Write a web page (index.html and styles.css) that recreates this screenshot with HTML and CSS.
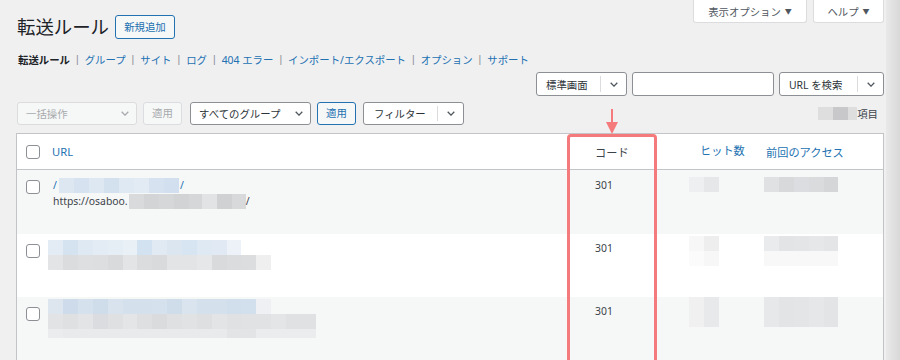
FILE: index.html
```html
<!DOCTYPE html>
<html lang="ja">
<head>
<meta charset="utf-8">
<title>転送ルール</title>
<link rel="stylesheet" href="styles.css">
</head>
<body>
<div class="page">
  <main class="main">
    <div class="header">
      <div class="title-row">
        <h1 class="title">転送ルール</h1>
        <a class="btn btn-primary-outline btn-add">新規追加</a>
      </div>
      <div class="screen-meta">
        <button class="meta-tab tab-options">表示オプション <span class="tri">▼</span></button>
        <button class="meta-tab tab-help">ヘルプ <span class="tri">▼</span></button>
      </div>
    </div>

    <ul class="subsub">
      <li class="current">転送ルール</li>
      <li class="sep">|</li>
      <li><a>グループ</a></li>
      <li class="sep">|</li>
      <li><a>サイト</a></li>
      <li class="sep">|</li>
      <li><a>ログ</a></li>
      <li class="sep">|</li>
      <li><a>404 エラー</a></li>
      <li class="sep">|</li>
      <li><a>インポート/エクスポート</a></li>
      <li class="sep">|</li>
      <li><a>オプション</a></li>
      <li class="sep">|</li>
      <li><a>サポート</a></li>
    </ul>

    <div class="search-row">
      <div class="select split sel-view">
        <span class="sel-label">標準画面</span>
        <span class="chev"><svg class="chev-ic" viewBox="0 0 8 5"><path d="M0.7 0.7 L4 4.1 L7.3 0.7" fill="none" stroke="currentColor" stroke-width="1.3"/></svg></span>
      </div>
      <div class="text-input"></div>
      <div class="select split sel-search">
        <span class="sel-label">URL を検索</span>
        <span class="chev"><svg class="chev-ic" viewBox="0 0 8 5"><path d="M0.7 0.7 L4 4.1 L7.3 0.7" fill="none" stroke="currentColor" stroke-width="1.3"/></svg></span>
      </div>
    </div>

    <div class="filter-row">
      <div class="select disabled sel-bulk">
        <span class="sel-label">一括操作</span>
        <span class="chev"><svg class="chev-ic" viewBox="0 0 8 5"><path d="M0.7 0.7 L4 4.1 L7.3 0.7" fill="none" stroke="currentColor" stroke-width="1.3"/></svg></span>
      </div>
      <span class="btn btn-disabled btn-apply">適用</span>
      <div class="select sel-group">
        <span class="sel-label">すべてのグループ</span>
        <span class="chev"><svg class="chev-ic" viewBox="0 0 8 5"><path d="M0.7 0.7 L4 4.1 L7.3 0.7" fill="none" stroke="currentColor" stroke-width="1.3"/></svg></span>
      </div>
      <span class="btn btn-primary-outline btn-apply">適用</span>
      <div class="select split sel-filter">
        <span class="sel-label">フィルター</span>
        <span class="chev"><svg class="chev-ic" viewBox="0 0 8 5"><path d="M0.7 0.7 L4 4.1 L7.3 0.7" fill="none" stroke="currentColor" stroke-width="1.3"/></svg></span>
      </div>
      <div class="count"><span class="mz mz-count"></span><span>項目</span></div>
    </div>

    <div class="table-wrap">
      <div class="row head">
        <div class="cell cb"><span class="checkbox"></span></div>
        <div class="cell"><a class="th-link">URL</a></div>
        <div class="cell code th-plain">コード</div>
        <div class="cell hits"><a class="th-link th-hits">ヒット数</a></div>
        <div class="cell access"><a class="th-link">前回のアクセス</a></div>
      </div>

      <div class="row body alt r1">
        <div class="cell cb"><span class="checkbox"></span></div>
        <div class="cell src">
          <div class="line"><a class="link">/</a><span class="mz mz-r1-src"></span><a class="link">/</a></div>
          <div class="line">https://osaboo.<span class="mz mz-r1-dst"></span>/</div>
        </div>
        <div class="cell code"><span class="num">301</span></div>
        <div class="cell hits"><span class="mz mz-hits mz-h1"></span></div>
        <div class="cell access"><span class="mz mz-acc mz-a1"></span></div>
      </div>

      <div class="row body r2">
        <div class="cell cb"><span class="checkbox"></span></div>
        <div class="cell src">
          <span class="mz mz-r2-src"></span>
          <span class="mz mz-r2-dst"></span>
        </div>
        <div class="cell code"><span class="num">301</span></div>
        <div class="cell hits"><span class="mz mz-hits mz-h2"></span></div>
        <div class="cell access"><span class="mz mz-acc mz-a2"></span></div>
      </div>

      <div class="row body alt r3">
        <div class="cell cb"><span class="checkbox"></span></div>
        <div class="cell src">
          <span class="mz mz-r3-src"></span>
          <span class="mz mz-r3-dst"></span>
          <span class="mz mz-r3-dst2"></span>
        </div>
        <div class="cell code"><span class="num">301</span></div>
        <div class="cell hits"><span class="mz mz-hits mz-h3"></span></div>
        <div class="cell access"><span class="mz mz-acc mz-a3"></span></div>
      </div>

      <div class="annot-box"></div>
      <svg class="annot-arrow" viewBox="0 0 12 25"><rect x="5" y="0" width="2" height="14" fill="#f47a7b"/><polygon points="0,13 12,13 6,25" fill="#f47a7b"/></svg>
    </div>
  </main>
  <div class="strip"></div>
</div>
</body>
</html>
```

FILE: styles.css
```css
* { box-sizing: border-box; }

html, body {
  margin: 0;
  padding: 0;
}

body {
  background: #f0f0f1;
  font-family: "Noto Sans", "Noto Sans CJK JP", sans-serif;
  font-size: 10.4px;
  color: #3c434a;
  width: 900px;
  height: 360px;
  overflow: hidden;
}

a { color: #2271b1; text-decoration: none; }

.page {
  display: flex;
  height: 360px;
}

.main {
  width: 886px;
  padding: 0 2px 0 16px;
  flex: none;
}

.strip {
  flex: 1;
  background: linear-gradient(90deg, #e9e9e9, #d8d8d8);
}

/* header */
.header {
  display: flex;
  justify-content: space-between;
  align-items: flex-start;
  height: 39px;
}

.title-row {
  display: flex;
  align-items: center;
  margin-top: 15px;
}

.title {
  margin: 0 6px 0 1px;
  font-size: 18.4px;
  font-weight: 400;
  line-height: 24px;
  color: #1d2327;
}

.btn {
  display: inline-flex;
  align-items: center;
  justify-content: center;
  height: 24px;
  border-radius: 3px;
  border: 1px solid #2271b1;
  font-size: 10.4px;
  line-height: 1;
  background: #f6f7f7;
}

.btn-primary-outline { color: #2271b1; border-color: #2271b1; }

.btn-add { width: 60px; }

.btn-disabled {
  color: #a7aaad;
  border-color: #dcdde0;
  background: #f6f7f7;
}

.btn-apply { width: 39px; height: 23px; }

.screen-meta {
  display: flex;
  gap: 6px;
}

.meta-tab {
  height: 23px;
  border: 1px solid #dcdcde;
  border-top: none;
  border-radius: 0 0 3px 3px;
  background: #fff;
  color: #50575e;
  font-family: inherit;
  font-size: 10.4px;
  padding: 0;
  display: flex;
  align-items: center;
  justify-content: center;
}

.tab-options { width: 114px; }
.tab-help { width: 71px; }

.tri { font-size: 7px; margin-left: 4px; color: #50575e; }

/* sub nav */
.subsub {
  list-style: none;
  margin: 14px 0 0 2px;
  padding: 0;
  display: flex;
  height: 14px;
  line-height: 14px;
  font-size: 10.4px;
}

.subsub .current { font-weight: 700; color: #1d2327; }
.subsub .sep {
  color: #8c8f94;
  margin: 0 6px;
  font-family: "Liberation Sans", sans-serif;
}

/* search row */
.search-row {
  display: flex;
  justify-content: flex-end;
  gap: 5px;
  margin-top: 5px;
  height: 24px;
}

.select {
  display: flex;
  align-items: stretch;
  height: 24px;
  border: 1px solid #8c8f94;
  border-radius: 3px;
  background: #fff;
  color: #2c3338;
}

.sel-label {
  flex: 1;
  display: flex;
  align-items: center;
  padding-left: 9px;
  white-space: nowrap;
}

.chev {
  display: flex;
  align-items: center;
  justify-content: center;
  color: #50575e;
  width: 26px;
}

.split .chev { border-left: 1px solid #dcdcde; margin: 3px 0; }

.chev-ic { width: 8px; height: 5px; display: block; }

.sel-view { width: 91px; }
.sel-search { width: 105px; }

.text-input {
  width: 142px;
  height: 24px;
  border: 1px solid #8c8f94;
  border-radius: 3px;
  background: #fff;
}

/* filter row */
.filter-row {
  display: flex;
  align-items: center;
  margin-top: 6px;
  height: 23px;
}

.filter-row .select { height: 23px; }

.sel-bulk { width: 120px; margin-left: 1px; }
.sel-bulk .sel-label { padding-left: 8px; }
.sel-bulk .chev { width: 22px; }
.select.disabled {
  border-color: #dcdcde;
  background: #f6f7f7;
  color: #a7aaad;
}
.select.disabled .chev { color: #a7aaad; }

.filter-row .btn-disabled { margin-left: 6px; }
.sel-group { width: 121px; margin-left: 8px; }
.sel-group .sel-label { padding-left: 8px; }
.sel-group .chev { width: 22px; }
.filter-row .btn-primary-outline { margin-left: 6px; }
.sel-filter { width: 101px; margin-left: 7px; }
.sel-filter .sel-label { padding-left: 10px; }

.count {
  margin-left: auto;
  margin-right: 6px;
  display: flex;
  align-items: center;
  color: #3c434a;
}

/* mosaic placeholders */
.mz { display: block; }

.mz-count {
  width: 39px;
  height: 13px;
  margin-top: -1px;
  background: linear-gradient(90deg, #dededf 0 15px, #c8c8ca 15px 30px, #dededf 30px 39px);
}

/* table */
.table-wrap {
  position: relative;
  margin-top: 8px;
  width: 868px;
  border: 1px solid #c3c4c7;
  border-bottom: none;
  background: #fff;
}

.row {
  display: grid;
  grid-template-columns: 35px 535px 105px 66px 1fr;
}

.row.head {
  height: 36px;
  border-bottom: 1px solid #c3c4c7;
  align-items: center;
  font-size: 11.2px;
}

.row.body { height: 63px; }
.row.r1 { height: 64px; }
.row.alt { background: #f6f7f7; }

.cell { min-width: 0; }

.cb { padding-left: 9px; }

.row.head .cb { display: flex; align-items: center; }

.checkbox {
  display: block;
  width: 14px;
  height: 14px;
  border: 1px solid #8c8f94;
  border-radius: 3px;
  background: #fff;
}

.th-link { color: #2271b1; }
.th-hits { position: relative; top: -2px; }
.th-plain { color: #3c434a; }

.code { padding-left: 8px; }
.hits { padding-left: 8px; }
.access { padding-left: 8px; }

.row.body .cb { padding-top: 10px; }
.r2 .cb, .r3 .cb { padding-top: 9px; }

.src { line-height: 16px; }
.r1 .src { padding-top: 7px; padding-left: 1px; }

.line { display: flex; align-items: center; height: 16px; white-space: nowrap; }

.link { color: #2271b1; }

.num { display: block; line-height: 16px; }
.r1 .num { padding-top: 7px; }
.r2 .num, .r3 .num { padding-top: 6px; }

.mz-r1-src {
  width: 120px;
  height: 15px;
  margin: 0 1px 0 2px;
  background: linear-gradient(90deg, #dde7f2 0 15px, #d6e2ef 15px 30px, #dde8f2 30px 45px, #d3e0ee 45px 60px, #dfe9f3 60px 75px, #e2eaf3 75px 90px, #d6e2ef 90px 105px, #d2dfee 105px 120px);
}

.mz-r1-dst {
  width: 117px;
  height: 15px;
  margin-left: 1px;
  background: linear-gradient(90deg, #d9dadc 0 15px, #d3d4d6 15px 30px, #d6d7d9 30px 45px, #d2d3d5 45px 60px, #d6d7d9 60px 73px, #e2e3e4 73px 88px, #d0d1d3 88px 103px, #d8d9db 103px 117px);
}

.r2 .src { padding-top: 6px; margin-left: -4px; }
.r3 .src { padding-top: 2px; margin-left: -4px; }

.mz-r2-src {
  width: 193px;
  height: 15px;
  background: linear-gradient(90deg, #e3ecf5 0 15px, #d5e3f0 15px 30px, #dfe9f3 30px 45px, #e3ecf4 45px 60px, #e5edf5 60px 75px, #e9f0f6 75px 89px, #d3e2f0 89px 104px, #e1eaf3 104px 119px, #dbe6f1 119px 134px, #d7e4f1 134px 149px, #dfe9f3 149px 164px, #e1eaf4 164px 179px, #edf2f8 179px 193px);
}

.mz-r2-dst {
  width: 223px;
  height: 15px;
  background: linear-gradient(90deg, #e3e4e5 0 15px, #dbdcdd 15px 30px, #dedfe0 30px 45px, #dddedf 45px 60px, #d9dadb 60px 75px, #e3e4e5 75px 89px, #dbdcdd 89px 104px, #d9dadc 104px 119px, #e3e4e5 119px 149px, #e6e7e8 149px 164px, #d9dadc 164px 179px, #dbdcdd 179px 194px, #dcdddf 194px 208px, #efefef 208px 223px);
}

.mz-r3-src {
  width: 223px;
  height: 15px;
  background: linear-gradient(90deg, #dde6ef 0 15px, #cddbea 15px 30px, #d5e1ed 30px 45px, #cfdcea 45px 60px, #d9e3ee 60px 75px, #d4e0ec 75px 104px, #d5e1ed 104px 119px, #cfdcea 119px 134px, #dae4ee 134px 149px, #d4e0ec 149px 179px, #d1deeb 179px 193px, #d2dfec 193px 208px, #eef0f3 208px 223px);
}

.mz-r3-dst {
  width: 268px;
  height: 15px;
  background: linear-gradient(90deg, #e2e3e4 0 15px, #dfe0e1 15px 30px, #e3e4e5 30px 45px, #dadcdf 45px 60px, #dfe0e1 60px 75px, #e4e5e6 75px 89px, #dedfe0 89px 104px, #dadbdd 104px 119px, #dfe0e2 119px 134px, #e1e2e3 134px 149px, #dedfe0 149px 164px, #e3e4e5 164px 179px, #e0e1e2 179px 194px, #e1e2e3 194px 223px, #e4e5e6 223px 238px, #e0e1e2 238px 268px);
}

.mz-r3-dst2 {
  width: 268px;
  height: 9px;
  background: linear-gradient(90deg, #ebeced 0 15px, #e9eaeb 15px 179px, #e3e4e6 179px 208px, #ebeced 208px 268px);
}

.mz-hits { width: 30px; margin-left: -11px; }
.mz-acc { width: 74px; margin-left: -2px; }

.mz-h1 {
  height: 15px;
  margin-top: 7px;
  background: linear-gradient(90deg, #eeeff0 0 15px, #e6e7e8 15px 30px);
}
.mz-a1 {
  height: 15px;
  margin-top: 7px;
  background: linear-gradient(90deg, #e0e1e3 0 15px, #d8d9db 15px 30px, #dcdde0 30px 45px, #dadbdd 45px 60px, #d5d6d8 60px 74px);
}

.mz-h2 {
  height: 30px;
  margin-top: 2px;
  background:
    linear-gradient(90deg, #f7f7f7 0 15px, #eeeeef 15px 30px) top / 100% 15px no-repeat,
    linear-gradient(90deg, #fbfbfb 0 15px, #f7f7f7 15px 30px) bottom / 100% 15px no-repeat;
}
.mz-a2 {
  height: 30px;
  margin-top: 2px;
  background:
    linear-gradient(90deg, #eaebec 0 15px, #e3e4e6 15px 30px, #e4e5e7 30px 45px, #e6e7e8 45px 60px, #e4e5e7 60px 74px) top / 100% 15px no-repeat,
    linear-gradient(90deg, #f8f8f9 0 74px) bottom / 100% 15px no-repeat;
}

.mz-h3 {
  height: 30px;
  background: linear-gradient(90deg, #f0f0f1 0 15px, #e8e9ea 15px 30px);
}
.mz-a3 {
  height: 30px;
  background: linear-gradient(90deg, #e7e8e9 0 15px, #e3e4e6 15px 30px, #e4e5e7 30px 45px, #e6e7e9 45px 60px, #e3e4e6 60px 74px);
}

/* annotation overlay */
.annot-box {
  position: absolute;
  left: 550px;
  top: 0;
  width: 90px;
  height: 260px;
  border: 3px solid #f47a7b;
  border-radius: 4px;
}

.annot-arrow {
  position: absolute;
  left: 589px;
  top: -25px;
  width: 12px;
  height: 25px;
}
```
